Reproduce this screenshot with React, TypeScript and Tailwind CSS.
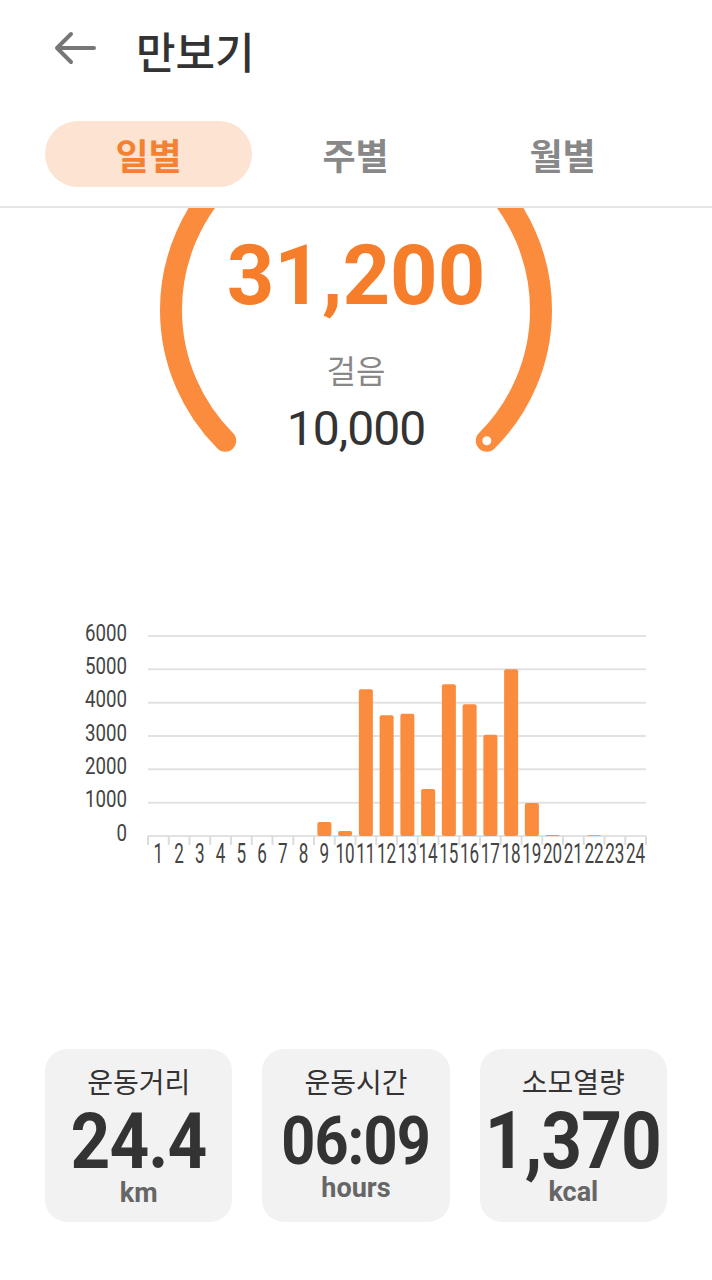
import React from 'react';

const KR = { fontFamily: '"Noto Sans CJK KR", "Noto Sans", sans-serif' };
const NUM = { fontFamily: 'Roboto, "Noto Sans CJK KR", sans-serif' };

const steps = [0, 0, 0, 0, 0, 0, 0, 0, 420, 150, 4400, 3620, 3670, 1410, 4550, 3950, 3040, 5000, 990, 30, 0, 20, 0, 0];

const StepChart = () => {
  const left = 148;
  const colW = 20.75;
  const base = 236;
  const scale = 200 / 6000;

  return (
    <svg width="712" height="280" viewBox="0 0 712 280" className="block">
      {[0, 1, 2, 3, 4, 5, 6].map((i) => {
        const y = base - i * (200 / 6);
        const label = String(i * 1000);
        return (
          <g key={i}>
            <line x1={left} x2={646} y1={y} y2={y} stroke="#e2e2e2" strokeWidth="2" />
            <text
              x={127}
              y={y + 4.5}
              textAnchor="end"
              fontSize="24"
              fill="#444"
              textLength={label.length * 10.5}
              lengthAdjust="spacingAndGlyphs"
              style={NUM}
            >
              {label}
            </text>
          </g>
        );
      })}
      {Array.from({ length: 25 }, (_, i) => (
        <line key={i} x1={left + i * colW} x2={left + i * colW} y1={base} y2={base + 9} stroke="#dcdcdc" strokeWidth="2" />
      ))}
      {steps.map((v, i) => {
        const h = v * scale;
        const cx = left + i * colW + colW / 2;
        return (
          <g key={i}>
            {h > 0 && <rect x={cx - 7} y={base - h} width="14" height={h} rx="2" fill="#fb8b3d" />}
            <text
              x={cx}
              y={263}
              textAnchor="middle"
              fontSize="28"
              fill="#444"
              textLength={String(i + 1).length * 9.6}
              lengthAdjust="spacingAndGlyphs"
              style={NUM}
            >
              {i + 1}
            </text>
          </g>
        );
      })}
    </svg>
  );
};

const StatCard = ({ label, value, unit, valueCls }: any) => (
  <div className="flex flex-col items-center rounded-[22px] bg-[#f2f2f2] h-[173px] pt-[18px]">
    <div className="text-[28px] leading-none text-[#333]" style={KR}>{label}</div>
    <div className={`${valueCls} font-bold leading-[0.8] text-[#333] scale-x-90 tracking-[-1px]`} style={NUM}>
      {value}
    </div>
    <div className="mt-[6px] text-[27px] font-bold leading-none text-[#666]" style={NUM}>{unit}</div>
  </div>
);

export default function App() {
  return (
    <div className="w-[712px] h-[1280px] bg-white overflow-hidden" style={KR}>
      {/* header */}
      <div className="h-[100px] flex items-center">
        <svg width="44" height="40" viewBox="0 0 44 40" className="ml-[53px] -mt-[4px]">
          <path d="M4 20 H41 M18 6 L4 20 L18 34" fill="none" stroke="#777" strokeWidth="4" strokeLinecap="round" strokeLinejoin="round" />
        </svg>
        <h1 className="ml-[39px] text-[43px] font-medium text-[#333] leading-none">만보기</h1>
      </div>

      {/* tabs */}
      <div className="pt-[21px] pb-[19px] border-b-2 border-[#e6e6e6]">
        <div className="grid grid-cols-3 w-[621px] ml-[45px]">
          <button className="h-[66px] rounded-full bg-[#fde3d1] text-[36px] font-bold text-[#f28232]">일별</button>
          <button className="h-[66px] text-[36px] font-bold text-[#888]">주별</button>
          <button className="h-[66px] text-[36px] font-bold text-[#888]">월별</button>
        </div>
      </div>

      {/* gauge */}
      <div className="grid h-[252px] overflow-hidden">
        <svg width="712" height="252" viewBox="0 0 712 252" className="[grid-area:1/1]">
          <path
            d="M225.2 232.8 A185 185 0 1 1 486.8 232.8"
            fill="none"
            stroke="#fb8b3d"
            strokeWidth="22"
            strokeLinecap="round"
          />
          <circle cx="486.8" cy="232.8" r="4.5" fill="#fff" />
        </svg>
        <div className="[grid-area:1/1] flex flex-col items-center pt-[26px]">
          <div className="text-[83px] font-bold leading-none text-[#f67d2a]" style={NUM}>31,200</div>
          <div className="mt-[36px] text-[32px] leading-none text-[#888]" style={KR}>걸음</div>
          <div className="mt-[20px] text-[48px] leading-none text-[#333] tracking-[-1px]" style={NUM}>10,000</div>
        </div>
      </div>

      {/* chart */}
      <div className="mt-[140px]">
        <StepChart />
      </div>

      {/* stats */}
      <div className="mt-[169px] grid grid-cols-3 gap-[30px] mx-[45px]">
        <StatCard label="운동거리" value="24.4" unit="km" valueCls="text-[77px] mt-[17px]" />
        <StatCard label="운동시간" value="06:09" unit="hours" valueCls="text-[66px] mt-[21px]" />
        <StatCard label="소모열량" value="1,370" unit="kcal" valueCls="text-[79px] mt-[15px]" />
      </div>
    </div>
  );
}
